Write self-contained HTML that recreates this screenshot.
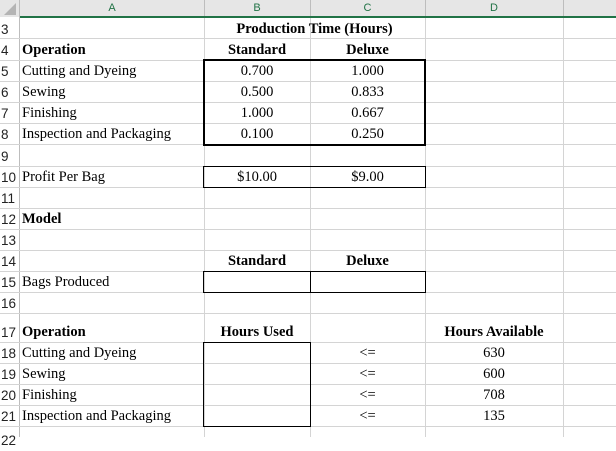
<!DOCTYPE html>
<html><head><style>
body{margin:0;width:616px;height:437px;overflow:hidden;background:#fff;position:relative;font-family:"Liberation Serif",serif;font-size:14.5px;color:#000}
div{position:absolute;box-sizing:border-box}
.h{left:0;width:616px;height:1px;background:#d4d4d4}
.v{top:0;height:437px;width:1px;background:#d4d4d4}
.rh{left:0;width:20px;font-family:"Liberation Sans",sans-serif;font-size:13.5px;color:#222;padding-left:1px}
.t{white-space:nowrap;line-height:20px}
.c{text-align:center}
.b{font-weight:bold}
.bx{border:2px solid #000}
.bx1{border:1px solid #000}
.ch{top:0;line-height:16px;font-family:"Liberation Sans",sans-serif;font-size:11px;color:#217346;text-align:center}
</style></head><body>
<div style="left:0;top:0;width:616px;height:16px;background:#e6e6e6"></div>
<div style="left:20px;top:16px;width:596px;height:2px;background:#217346"></div>
<div style="left:0;top:0;width:20px;height:437px;background:#fff"></div>
<div style="left:0;top:0;width:20px;height:17px;background:#e6e6e6"></div>
<div style="left:19px;top:0;width:1px;height:437px;background:#bdbdbd"></div>
<div style="left:4px;top:3px;width:0;height:0;border-left:12px solid transparent;border-bottom:12px solid #b4b4b4"></div>
<div class="t ch" style="left:20px;width:184px">A</div>
<div class="t ch" style="left:204px;width:106px">B</div>
<div class="t ch" style="left:310px;width:115px">C</div>
<div class="t ch" style="left:425px;width:138px">D</div>
<div style="left:204px;top:0;width:1px;height:16px;background:#bdbdbd"></div>
<div style="left:310px;top:0;width:1px;height:16px;background:#bdbdbd"></div>
<div style="left:425px;top:0;width:1px;height:16px;background:#bdbdbd"></div>
<div style="left:563px;top:0;width:1px;height:16px;background:#bdbdbd"></div>

<div class="v" style="left:204px;top:18px;height:419px"></div>
<div class="v" style="left:310px;top:18px;height:419px"></div>
<div class="v" style="left:425px;top:18px;height:419px"></div>
<div class="v" style="left:563px;top:18px;height:419px"></div>

<div class="h" style="top:38px"></div><div class="h" style="top:60px"></div><div class="h" style="top:81px"></div><div class="h" style="top:102px"></div><div class="h" style="top:123px"></div><div class="h" style="top:144px"></div><div class="h" style="top:166px"></div><div class="h" style="top:187px"></div><div class="h" style="top:208px"></div><div class="h" style="top:229px"></div><div class="h" style="top:250px"></div><div class="h" style="top:271px"></div><div class="h" style="top:292px"></div><div class="h" style="top:313px"></div><div class="h" style="top:342px"></div><div class="h" style="top:363px"></div><div class="h" style="top:384px"></div><div class="h" style="top:405px"></div><div class="h" style="top:426px"></div>

<div class="t rh" style="top:20px">3</div>
<div class="t rh" style="top:41px">4</div>
<div class="t rh" style="top:62px">5</div>
<div class="t rh" style="top:83px">6</div>
<div class="t rh" style="top:104px">7</div>
<div class="t rh" style="top:125px">8</div>
<div class="t rh" style="top:147px">9</div>
<div class="t rh" style="top:168px">10</div>
<div class="t rh" style="top:189px">11</div>
<div class="t rh" style="top:210px">12</div>
<div class="t rh" style="top:231px">13</div>
<div class="t rh" style="top:252px">14</div>
<div class="t rh" style="top:273px">15</div>
<div class="t rh" style="top:294px">16</div>
<div class="t rh" style="top:323px">17</div>
<div class="t rh" style="top:344px">18</div>
<div class="t rh" style="top:365px">19</div>
<div class="t rh" style="top:386px">20</div>
<div class="t rh" style="top:407px">21</div>
<div class="t rh" style="top:431px">22</div>

<div class="t c b" style="left:204px;width:221px;top:19px">Production Time (Hours)</div>
<div class="t b" style="left:22px;top:40px">Operation</div>
<div class="t c b" style="left:204px;width:106px;top:40px">Standard</div>
<div class="t c b" style="left:310px;width:115px;top:40px">Deluxe</div>
<div class="t" style="left:22px;top:61px">Cutting and Dyeing</div>
<div class="t" style="left:22px;top:82px">Sewing</div>
<div class="t" style="left:22px;top:103px">Finishing</div>
<div class="t" style="left:22px;top:124px">Inspection and Packaging</div>
<div class="t c" style="left:204px;width:106px;top:61px">0.700</div>
<div class="t c" style="left:204px;width:106px;top:82px">0.500</div>
<div class="t c" style="left:204px;width:106px;top:103px">1.000</div>
<div class="t c" style="left:204px;width:106px;top:124px">0.100</div>
<div class="t c" style="left:310px;width:115px;top:61px">1.000</div>
<div class="t c" style="left:310px;width:115px;top:82px">0.833</div>
<div class="t c" style="left:310px;width:115px;top:103px">0.667</div>
<div class="t c" style="left:310px;width:115px;top:124px">0.250</div>
<div class="bx" style="left:203px;top:59px;width:223px;height:87px"></div>

<div class="t" style="left:22px;top:167px">Profit Per Bag</div>
<div class="t c" style="left:204px;width:106px;top:167px">$10.00</div>
<div class="t c" style="left:310px;width:115px;top:167px">$9.00</div>
<div class="bx1" style="left:203px;top:166px;width:223px;height:22px"></div>

<div class="t b" style="left:22px;top:209px">Model</div>
<div class="t c b" style="left:204px;width:106px;top:251px">Standard</div>
<div class="t c b" style="left:310px;width:115px;top:251px">Deluxe</div>
<div class="t" style="left:22px;top:272px">Bags Produced</div>
<div class="bx1" style="left:203px;top:271px;width:223px;height:22px"></div>
<div style="left:310px;top:271px;width:1px;height:22px;background:#000"></div>

<div class="t b" style="left:22px;top:322px">Operation</div>
<div class="t c b" style="left:204px;width:106px;top:322px">Hours Used</div>
<div class="t c b" style="left:425px;width:138px;top:322px">Hours Available</div>
<div class="t" style="left:22px;top:343px">Cutting and Dyeing</div>
<div class="t" style="left:22px;top:364px">Sewing</div>
<div class="t" style="left:22px;top:385px">Finishing</div>
<div class="t" style="left:22px;top:406px">Inspection and Packaging</div>
<div class="bx1" style="left:203px;top:342px;width:108px;height:85px"></div>
<div class="t c" style="left:310px;width:115px;top:343px">&lt;=</div>
<div class="t c" style="left:310px;width:115px;top:364px">&lt;=</div>
<div class="t c" style="left:310px;width:115px;top:385px">&lt;=</div>
<div class="t c" style="left:310px;width:115px;top:406px">&lt;=</div>
<div class="t c" style="left:425px;width:138px;top:343px">630</div>
<div class="t c" style="left:425px;width:138px;top:364px">600</div>
<div class="t c" style="left:425px;width:138px;top:385px">708</div>
<div class="t c" style="left:425px;width:138px;top:406px">135</div>
</body></html>
